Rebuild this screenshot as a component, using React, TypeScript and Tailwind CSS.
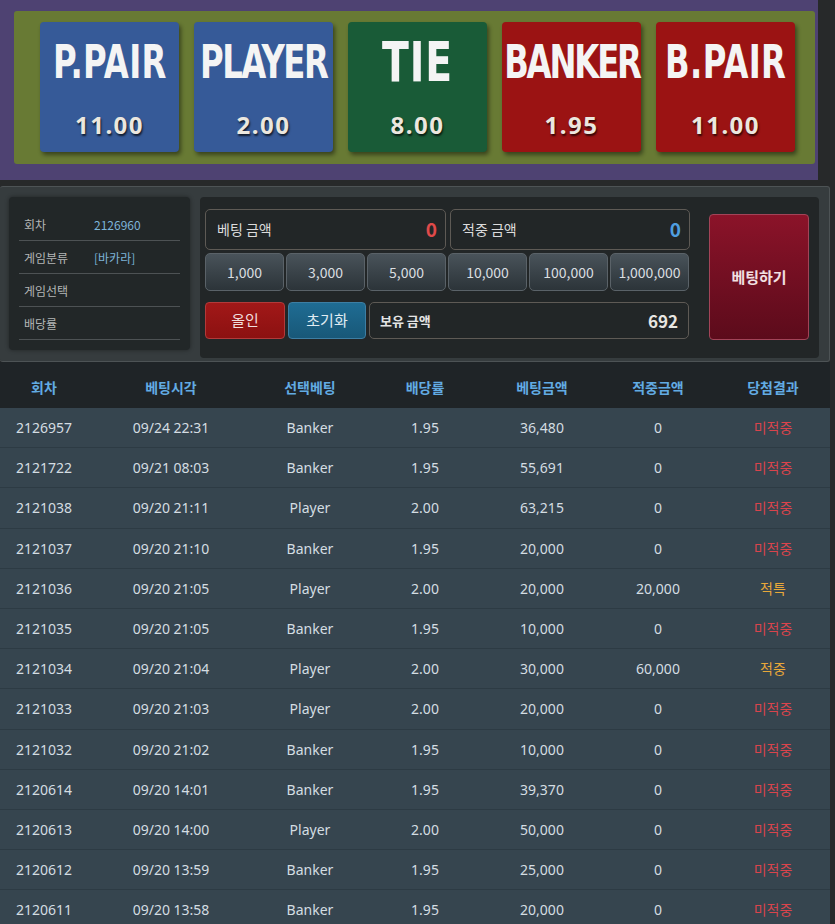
import React from "react";

const cards = [
  { label: "P.PAIR", odds: "11.00", bg: "bg-[#365a98]", lbl: "text-[46px] tracking-[0.01em]" },
  { label: "PLAYER", odds: "2.00", bg: "bg-[#365a98]", lbl: "text-[46px] tracking-[-0.04em]" },
  { label: "TIE", odds: "8.00", bg: "bg-[#195b37]", lbl: "text-[56px] tracking-[0.02em]" },
  { label: "BANKER", odds: "1.95", bg: "bg-[#9b1313]", lbl: "text-[46px] tracking-[-0.06em]" },
  { label: "B.PAIR", odds: "11.00", bg: "bg-[#9b1313]", lbl: "text-[46px] tracking-[0.01em]" },
];

const chips = ["1,000", "3,000", "5,000", "10,000", "100,000", "1,000,000"];

const rows = [
  ["2126957", "09/24 22:31", "Banker", "1.95", "36,480", "0", "미적중"],
  ["2121722", "09/21 08:03", "Banker", "1.95", "55,691", "0", "미적중"],
  ["2121038", "09/20 21:11", "Player", "2.00", "63,215", "0", "미적중"],
  ["2121037", "09/20 21:10", "Banker", "1.95", "20,000", "0", "미적중"],
  ["2121036", "09/20 21:05", "Player", "2.00", "20,000", "20,000", "적특"],
  ["2121035", "09/20 21:05", "Banker", "1.95", "10,000", "0", "미적중"],
  ["2121034", "09/20 21:04", "Player", "2.00", "30,000", "60,000", "적중"],
  ["2121033", "09/20 21:03", "Player", "2.00", "20,000", "0", "미적중"],
  ["2121032", "09/20 21:02", "Banker", "1.95", "10,000", "0", "미적중"],
  ["2120614", "09/20 14:01", "Banker", "1.95", "39,370", "0", "미적중"],
  ["2120613", "09/20 14:00", "Player", "2.00", "50,000", "0", "미적중"],
  ["2120612", "09/20 13:59", "Banker", "1.95", "25,000", "0", "미적중"],
  ["2120611", "09/20 13:58", "Banker", "1.95", "20,000", "0", "미적중"],
];

const heads = ["회차", "베팅시각", "선택베팅", "배당률", "베팅금액", "적중금액", "당첨결과"];
const colW = ["w-[88px]", "w-[166px]", "w-[112px]", "w-[118px]", "w-[116px]", "w-[116px]", "w-[114px]"];

function InfoRow({ label, value }: { label: string; value?: string }) {
  return (
    <div className="flex h-[33px] items-center border-b border-[#4d5254] pl-[5px] pt-[2px] text-[12px]">
      <span className="w-[70px] text-[#b3b6b6]">{label}</span>
      <span className="text-[#7db4d8]">{value}</span>
    </div>
  );
}

export default function App() {
  return (
    <div className="h-[924px] w-[835px] overflow-hidden bg-[#27292a] font-['Noto_Sans','Noto_Sans_CJK_KR',sans-serif]">
      {/* odds board */}
      <div className="h-[180px] w-[818px] bg-[#4e4272] pl-[14px] pt-[11px]">
        <div className="flex h-[153px] w-[801px] gap-[15px] rounded-[3px] bg-[#687a34] pl-[26px] pt-[11px]">
          {cards.map((c) => (
            <div
              key={c.label}
              className={`${c.bg} flex h-[130px] w-[139px] flex-col items-center rounded-[4px] shadow-[2px_3px_4px_rgba(0,0,0,0.45)]`}
            >
              <div
                className={`${c.lbl} mt-[14px] flex h-[52px] origin-center scale-x-[0.78] items-center whitespace-nowrap font-['Liberation_Sans_Narrow','DejaVu_Sans_Condensed',sans-serif] font-bold leading-none text-[#f4f4f4]`}
              >
                {c.label}
              </div>
              <div className="mt-[23px] text-[24px] font-bold leading-[28px] tracking-[1.5px] text-[#ebe7df] [text-shadow:1px_2px_2px_rgba(0,0,0,0.7)]">
                {c.odds}
              </div>
            </div>
          ))}
        </div>
      </div>

      <div className="h-[6px]" />

      {/* bet controls */}
      <div className="flex h-[176px] w-[830px] gap-[10px] rounded-[3px] border-t border-r border-b border-[#4d5355] bg-[#363c3e] pl-[9px] pt-[10px] font-['Noto_Sans_CJK_KR','Noto_Sans',sans-serif]">
        <div className="h-[153px] w-[181px] rounded-[4px] bg-[#222728] px-[10px] pt-[11px] shadow-[0_0_4px_rgba(0,0,0,0.4)]">
          <InfoRow label="회차" value="2126960" />
          <InfoRow label="게임분류" value="[바카라]" />
          <InfoRow label="게임선택" />
          <InfoRow label="배당률" />
        </div>

        <div className="flex h-[161px] w-[619px] rounded-[4px] bg-[#222627] pl-[5px] pt-[12px]">
          <div className="flex w-[485px] flex-col">
            <div className="flex gap-[4px]">
              <div className="flex h-[41px] w-[241px] items-center justify-between rounded-[5px] border border-[#5e5a55] pl-[11px] pr-[8px]">
                <span className="text-[14px] text-[#dcdcdc]">베팅 금액</span>
                <span className="text-[19px] font-bold text-[#e04a4a]">0</span>
              </div>
              <div className="flex h-[41px] w-[240px] items-center justify-between rounded-[5px] border border-[#5e5a55] pl-[11px] pr-[8px]">
                <span className="text-[14px] text-[#dcdcdc]">적중 금액</span>
                <span className="text-[19px] font-bold text-[#4f9fe0]">0</span>
              </div>
            </div>
            <div className="mt-[3px] flex gap-[2px]">
              {chips.map((c) => (
                <div
                  key={c}
                  className="flex h-[38px] w-[79px] items-center justify-center rounded-[5px] border border-[#5a6268] bg-gradient-to-b from-[#49535a] to-[#2c3439] text-[14px] text-[#dadee0]"
                >
                  {c}
                </div>
              ))}
            </div>
            <div className="mt-[11px] flex gap-[3px]">
              <div className="flex h-[37px] w-[80px] items-center justify-center rounded-[4px] border border-[#b23a3a] bg-gradient-to-b from-[#a11818] to-[#8c1111] text-[15px] text-[#f0dede]">
                올인
              </div>
              <div className="flex h-[37px] w-[78px] items-center justify-center rounded-[4px] border border-[#3d7ea3] bg-gradient-to-b from-[#1f6c93] to-[#185878] text-[15px] text-[#e0ecf3]">
                초기화
              </div>
              <div className="flex h-[37px] w-[320px] items-center justify-between rounded-[5px] border border-[#5e5a55] pl-[10px] pr-[10px]">
                <span className="text-[13px] font-bold text-[#e4e4e4]">보유 금액</span>
                <span className="text-[17px] font-bold text-[#e8e6e2]">692</span>
              </div>
            </div>
          </div>
          <div className="ml-[19px] mt-[5px] flex h-[126px] w-[100px] items-center justify-center rounded-[4px] border border-[#a24458] bg-gradient-to-b from-[#8b1329] to-[#5c0b1b] text-[15px] font-bold text-[#f2e0e2]">
            베팅하기
          </div>
        </div>
      </div>

      {/* history table */}
      <div className="w-[830px]">
        <div className="flex h-[46px] items-center bg-[#1f2427] pt-[4px] text-[14px] font-bold text-[#62abe3]">
          {heads.map((h, i) => (
            <div key={h} className={`${colW[i]} text-center`}>
              {h}
            </div>
          ))}
        </div>
        {rows.map((r) => (
          <div key={r[0]} className="flex h-[40.2px] items-center border-b border-[#2d3b44] bg-[#36454f] text-[14px] text-[#d4dde2]">
            {r.map((v, i) => (
              <div
                key={i}
                className={`${colW[i]} text-center ${
                  i === 6 ? (v === "미적중" ? "text-[#d9444c]" : "text-[#e8a83a]") : ""
                }`}
              >
                {v}
              </div>
            ))}
          </div>
        ))}
      </div>
    </div>
  );
}
